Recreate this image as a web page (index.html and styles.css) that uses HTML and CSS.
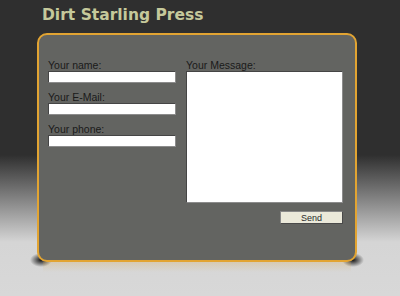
FILE: index.html
```html
<!DOCTYPE html>
<html lang="en">
<head>
  <meta charset="UTF-8">
  <title>Dirt Starling Press - Contact</title>
  <link rel="stylesheet" href="styles.css">
</head>
<body>
  <h1 class="title">Dirt Starling Press</h1>

  <form class="contact" method="post">
    <div class="fields">
      <div class="col-left">
        <label for="name">Your name:</label>
        <input type="text" id="name" name="name">
        <label for="email">Your E-Mail:</label>
        <input type="text" id="email" name="email">
        <label for="phone">Your phone:</label>
        <input type="text" id="phone" name="phone">
      </div>
      <div class="col-right">
        <label for="message">Your Message:</label>
        <textarea id="message" name="message"></textarea>
        <button type="submit" class="send">Send</button>
      </div>
    </div>
  </form>
</body>
</html>
```

FILE: styles.css
```css
html, body {
  margin: 0;
  padding: 0;
}

body {
  height: 296px;
  background: linear-gradient(#2f2f2f 0, #2f2f2f 155px, #d5d5d5 242px, #d8d8d8 100%);
  font-family: "Liberation Sans", Arial, sans-serif;
  color: #1c1c1c;
}

.title {
  margin: 0;
  padding: 5px 0 0 42px;
  height: 28px;
  font-family: "DejaVu Sans", Verdana, sans-serif;
  font-size: 15.5px;
  font-weight: bold;
  line-height: 20px;
  color: #c5c99b;
}

.contact {
  position: relative;
  box-sizing: border-box;
  width: 320px;
  height: 229px;
  margin: 0 0 0 37px;
  padding: 24px 12px 0 9px;
  background-color: #636461;
  border: 2px solid #e2a432;
  border-radius: 10px;
}

/* dark shadow blobs under the bottom corners */
.contact::before {
  content: "";
  position: absolute;
  z-index: -1;
  left: -10px;
  right: -10px;
  bottom: -8px;
  height: 20px;
  background:
    radial-gradient(ellipse 11px 7px at 12px 12px, rgba(0,0,0,0.9), rgba(0,0,0,0) 100%),
    radial-gradient(ellipse 11px 7px at calc(100% - 12px) 12px, rgba(0,0,0,0.9), rgba(0,0,0,0) 100%);
}

/* faint reflection below the panel */
.contact::after {
  content: "";
  position: absolute;
  z-index: -1;
  left: 4px;
  right: 4px;
  bottom: -12px;
  height: 10px;
  background: linear-gradient(rgba(214,160,60,0.22), rgba(214,214,214,0));
}

.fields {
  display: flex;
  gap: 10px;
}

.col-left {
  display: flex;
  flex-direction: column;
  width: 128px;
}

.col-right {
  display: flex;
  flex-direction: column;
  width: 157px;
}

label {
  display: block;
  font-size: 10.5px;
  line-height: 12px;
  color: #1a1a1a;
}

.col-left label + input {
  margin-bottom: 8px;
}

input, textarea {
  box-sizing: border-box;
  margin: 0;
  padding: 0 2px;
  background-color: #fff;
  border: 1px solid;
  border-color: #454545 #8c8c8c #8c8c8c #454545;
  font-family: "Liberation Sans", Arial, sans-serif;
  font-size: 10px;
  outline: none;
}

input {
  width: 128px;
  height: 12px;
}

textarea {
  width: 157px;
  height: 132px;
  resize: none;
}

.send {
  align-self: flex-end;
  box-sizing: border-box;
  width: 63px;
  height: 13px;
  margin-top: 8px;
  padding: 0;
  background-color: #ebe9da;
  border: 1px solid;
  border-color: #888 #4a4a4a #4a4a4a #888;
  font-family: "Liberation Sans", Arial, sans-serif;
  font-size: 9px;
  line-height: 10px;
  color: #2a2a2a;
  cursor: pointer;
}
```
